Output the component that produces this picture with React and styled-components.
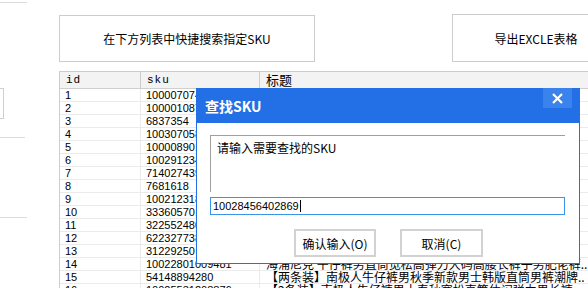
import React from "react";
import styled, { createGlobalStyle } from "styled-components";

const GlobalStyle = createGlobalStyle`
  html, body {
    margin: 0;
    padding: 0;
    background: #ffffff;
  }
  body {
    width: 588px;
    height: 288px;
    overflow: hidden;
    font-family: "Noto Sans CJK SC", "Liberation Sans", sans-serif;
    font-size: 12px;
    color: #000000;
  }
`;

const Page = styled.div`
  display: flex;
  width: 588px;
  height: 288px;
  overflow: hidden;
`;

const SidePanel = styled.aside`
  width: 59px;
  flex-shrink: 0;
  display: flex;
  flex-direction: column;
`;

const SideRule = styled.div`
  width: ${(p) => p.$width}px;
  height: 1px;
  margin-top: ${(p) => p.$gap}px;
  background: #dcdcdc;
`;

const SideBox = styled.div`
  width: 3px;
  height: 29px;
  margin-top: ${(p) => p.$gap}px;
  border: 1px solid #cfcfcf;
  border-left: none;
`;

const Main = styled.main`
  position: relative;
  flex: 1;
  overflow: hidden;
  padding-top: 14px;
`;

const Toolbar = styled.div`
  display: flex;
  align-items: flex-start;
  gap: 137px;
  height: 48px;
`;

const ActionButton = styled.button`
  flex-shrink: 0;
  width: ${(p) => p.$width}px;
  height: ${(p) => (p.$raise ? 48 : 47)}px;
  margin-top: ${(p) => (p.$raise ? 0 : 1)}px;
  border: 1px solid #cccccc;
  background: #ffffff;
  font-family: "Noto Sans CJK SC", sans-serif;
  font-size: 12px;
  color: #000000;
  padding: 0;
`;

const Table = styled.div`
  margin-top: 9px;
  width: 580px;
  border-top: 1px solid #cccccc;
  border-left: 1px solid #cccccc;
`;

const HeaderRow = styled.div`
  display: grid;
  grid-template-columns: 81px 119px 1fr;
  height: 16px;
  background: #f3f3f3;
  border-bottom: 1px solid #cfcfcf;
`;

const HeaderCell = styled.div`
  display: flex;
  align-items: center;
  padding-left: ${(p) => (p.$cjk ? 6 : 6)}px;
  border-right: 1px solid #cccccc;
  font-family: ${(p) =>
    p.$cjk ? `"Noto Sans CJK SC", sans-serif` : `"Liberation Mono", monospace`};
  font-size: ${(p) => (p.$cjk ? 13 : 11)}px;
  letter-spacing: ${(p) => (p.$cjk ? 0 : 1)}px;
  line-height: 16px;
`;

const Row = styled.div`
  display: grid;
  grid-template-columns: 81px 119px 1fr;
  height: 12px;
  border-bottom: 1px solid #ebebeb;
`;

const Cell = styled.div`
  padding-left: ${(p) => (p.$title ? 6 : 5)}px;
  border-right: 1px solid #ebebeb;
  white-space: nowrap;
  overflow: hidden;
  font-family: ${(p) =>
    p.$title ? `"Noto Sans CJK SC", sans-serif` : `"Liberation Sans", sans-serif`};
  font-size: ${(p) => (p.$title ? 12 : 11)}px;
  line-height: 12px;
`;

const Dialog = styled.div`
  position: absolute;
  left: 137px;
  top: 88px;
  width: 382px;
  height: 174px;
  border: 1px solid #2370e6;
  background: #ffffff;
  display: flex;
  flex-direction: column;
`;

const TitleBar = styled.div`
  display: flex;
  justify-content: space-between;
  align-items: center;
  height: 35px;
  margin-top: -1px;
  padding: 0 7px 0 8px;
  background: #2370e6;
`;

const TitleText = styled.span`
  color: #ffffff;
  font-family: "Noto Sans CJK SC", sans-serif;
  font-weight: 700;
  font-size: 14px;
  line-height: 14px;
  margin-top: 1px;
`;

const CloseButton = styled.div`
  align-self: flex-start;
  width: 29px;
  height: 20px;
  background: #3a82ec;
  display: flex;
  align-items: center;
  justify-content: center;
`;

const DialogBody = styled.div`
  display: flex;
  flex-direction: column;
  padding: 12px 14px 0 13px;
`;

const PromptBox = styled.div`
  height: 50px;
  border-top: 1px solid #a0a0a0;
  border-left: 1px solid #a0a0a0;
  padding: 6px 0 0 6px;
  font-family: "Noto Sans CJK SC", sans-serif;
  font-size: 12px;
  line-height: 12px;
`;

const SkuInput = styled.div`
  margin-top: 5px;
  height: 16px;
  border: 1px solid #3a95e8;
  display: flex;
  align-items: center;
  padding-left: 2px;
  font-family: "Liberation Sans", sans-serif;
  font-size: 11px;
`;

const Caret = styled.span`
  display: inline-block;
  width: 1px;
  height: 12px;
  margin-left: 1px;
  background: #000000;
`;

const ButtonRow = styled.div`
  display: flex;
  justify-content: center;
  gap: 24px;
  margin-top: 14px;
  padding-left: 2px;
`;

const DialogButton = styled.button`
  width: ${(p) => p.$width}px;
  height: 28px;
  border: 2px solid #d2d2d2;
  background: #ffffff;
  padding: 0;
  font-family: "Noto Sans CJK SC", sans-serif;
  font-size: 12px;
  color: #000000;
`;

const rows = [
  ["1", "10000707412345", "【官方正品】李宁运动裤男士秋冬季新款休闲长裤..."],
  ["2", "10000108765432", "花花公子牛仔裤男宽松直筒秋冬款加绒加厚男装至.."],
  ["3", "6837354", "Levi's李维斯511修身牛仔裤男士弹力小脚裤3.."],
  ["4", "10030705812267", "森马牛仔裤男春秋季新款潮流宽松直筒休闲长裤.."],
  ["5", "10000890176543", "JEEP吉普牛仔裤男宽松直筒春季新款官方旗舰公司"],
  ["6", "10029123487710", "真维斯牛仔裤男秋冬款加绒休闲男士修身长裤子.."],
  ["7", "71402743955", "唐狮牛仔裤男直筒宽松弹力青少年学生百搭牛仔"],
  ["8", "7681618", "GXG男装秋季新品深蓝色修身小脚牛仔长裤男.."],
  ["9", "10021231864402", "马克华菲牛仔裤男潮牌宽松直筒秋冬季加绒加厚简"],
  ["10", "33360570112", "太平鸟男装牛仔裤男2023秋冬新款休闲九分裤夏"],
  ["11", "32255248061", "海澜之家牛仔裤男春秋季中腰直筒舒适弹力长裤.."],
  ["12", "62232773852", "杰克琼斯秋季男士宽松锥形牛仔裤水洗做旧男叩"],
  ["13", "31229250", "七匹狼牛仔裤男秋冬季新款商务休闲直筒长裤子.."],
  ["14", "10022801009481", "海浦尼克 牛仔裤男直筒宽松高弹力大码高腰长裤子男肥佬裤.."],
  ["15", "54148894280", "【两条装】南极人牛仔裤男秋季新款男士韩版直筒男裤潮牌.."],
  ["16", "10025531208876", "【2条装】南极人牛仔裤男士春秋宽松直筒休闲弹力男长裤.."],
];

const CloseIcon = () => (
  <svg width="11" height="11" viewBox="0 0 11 11">
    <path d="M1 1 L10 10 M10 1 L1 10" stroke="#ffffff" strokeWidth="2.2" />
  </svg>
);

export default function App() {
  return (
    <>
      <GlobalStyle />
      <Page>
        <SidePanel>
          <SideRule $width={27} $gap={2} />
          <SideBox $gap={85} />
          <SideRule $width={25} $gap={18} />
          <SideRule $width={27} $gap={79} />
        </SidePanel>
        <Main>
          <Toolbar>
            <ActionButton $width={256}>在下方列表中快捷搜索指定SKU</ActionButton>
            <ActionButton $width={168} $raise>
              导出EXCLE表格
            </ActionButton>
          </Toolbar>
          <Table>
            <HeaderRow>
              <HeaderCell>id</HeaderCell>
              <HeaderCell>sku</HeaderCell>
              <HeaderCell $cjk>标题</HeaderCell>
            </HeaderRow>
            {rows.map(([id, sku, title]) => (
              <Row key={id}>
                <Cell>{id}</Cell>
                <Cell>{sku}</Cell>
                <Cell $title>{title}</Cell>
              </Row>
            ))}
          </Table>
          <Dialog>
            <TitleBar>
              <TitleText>查找SKU</TitleText>
              <CloseButton>
                <CloseIcon />
              </CloseButton>
            </TitleBar>
            <DialogBody>
              <PromptBox>请输入需要查找的SKU</PromptBox>
              <SkuInput>
                10028456402869
                <Caret />
              </SkuInput>
              <ButtonRow>
                <DialogButton $width={82}>确认输入(O)</DialogButton>
                <DialogButton $width={83}>取消(C)</DialogButton>
              </ButtonRow>
            </DialogBody>
          </Dialog>
        </Main>
      </Page>
    </>
  );
}
